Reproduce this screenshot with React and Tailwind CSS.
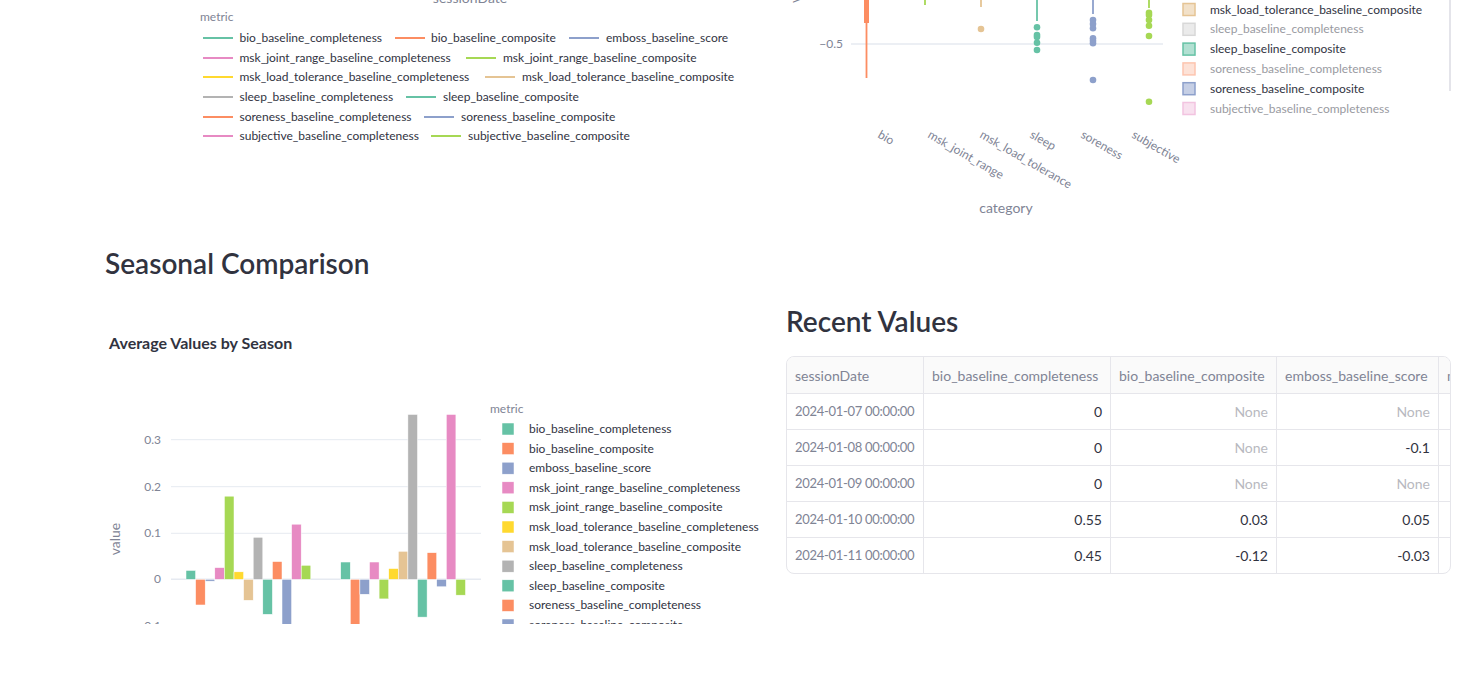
import React from 'react';

const SET2 = ['#66c2a5', '#fc8d62', '#8da0cb', '#e78ac3', '#a6d854', '#ffd92f', '#e5c494', '#b3b3b3'];
const AXIS = '#808495';
const INK = '#31333F';

const METRICS = [
  'bio_baseline_completeness',
  'bio_baseline_composite',
  'emboss_baseline_score',
  'msk_joint_range_baseline_completeness',
  'msk_joint_range_baseline_composite',
  'msk_load_tolerance_baseline_completeness',
  'msk_load_tolerance_baseline_composite',
  'sleep_baseline_completeness',
  'sleep_baseline_composite',
  'soreness_baseline_completeness',
  'soreness_baseline_composite',
  'subjective_baseline_completeness',
  'subjective_baseline_composite',
];
const colorOf = (i) => SET2[i % 8];

// line legend of the trend chart: [lineX, textX, metric index]
const LINE_LEGEND = [
  { y: 38, items: [[203, 239.5, 0], [395, 431, 1], [569, 606, 2]] },
  { y: 58, items: [[203, 239.5, 3], [466, 503, 4]] },
  { y: 77, items: [[203, 239.5, 5], [485, 522, 6]] },
  { y: 97, items: [[203, 239.5, 7], [406, 443, 8]] },
  { y: 117, items: [[203, 239.5, 9], [424, 461, 10]] },
  { y: 136, items: [[203, 239.5, 11], [431, 468, 12]] },
];

const TrendLegend = () => (
  <svg width="665" height="245" viewBox="105 0 665 245" className="block">
    <text x="470" y="3" fontSize="14" fill={AXIS} textAnchor="middle">sessionDate</text>
    <text x="200" y="21" fontSize="12" fill={AXIS}>metric</text>
    {LINE_LEGEND.map((row) =>
      row.items.map(([lx, tx, m]) => (
        <g key={m}>
          <line x1={lx} x2={lx + 30} y1={row.y} y2={row.y} stroke={colorOf(m)} strokeWidth="2" />
          <text x={tx} y={row.y + 4} fontSize="12" fill={INK}>{METRICS[m]}</text>
        </g>
      ))
    )}
  </svg>
);

const BOX_LEGEND = [
  { m: 6, on: true },
  { m: 7, on: false },
  { m: 8, on: true },
  { m: 9, on: false },
  { m: 10, on: true },
  { m: 11, on: false },
];

const CATEGORIES = [
  ['bio', 877],
  ['msk_joint_range', 927],
  ['msk_load_tolerance', 979],
  ['sleep', 1029],
  ['soreness', 1080],
  ['subjective', 1131],
];

const Dots = ({ x, ys, color }) => ys.map((y, i) => <circle key={i} cx={x} cy={y} r="3.3" fill={color} />);

const CategoryBox = () => (
  <svg width="665" height="245" viewBox="786 0 665 245" className="block">
    <text x="800" y="3" fontSize="14" fill={AXIS} transform="rotate(-90 800 3)">value</text>
    <line x1="851" x2="1163" y1="44" y2="44" stroke="#e6eaf1" strokeWidth="1.5" />
    <text x="843" y="48" fontSize="12" fill={AXIS} textAnchor="end">−0.5</text>

    <rect x="864" y="-2" width="5" height="25" fill="#fc8d62" />
    <line x1="866.5" x2="866.5" y1="22" y2="78" stroke="#fc8d62" strokeWidth="1.8" />
    <line x1="925" x2="925" y1="0" y2="5" stroke="#a6d854" strokeWidth="1.8" />
    <line x1="981" x2="981" y1="0" y2="7" stroke="#e5c494" strokeWidth="1.8" />
    <Dots x={981} ys={[29]} color="#e5c494" />
    <line x1="1037" x2="1037" y1="0" y2="21" stroke="#66c2a5" strokeWidth="1.8" />
    <Dots x={1037} ys={[27.3, 35, 37, 42.7, 50]} color="#66c2a5" />
    <line x1="1093" x2="1093" y1="0" y2="14" stroke="#8da0cb" strokeWidth="1.8" />
    <Dots x={1093} ys={[20, 24, 28.3, 38.3, 40.7, 43.3, 80]} color="#8da0cb" />
    <line x1="1149" x2="1149" y1="0" y2="8" stroke="#a6d854" strokeWidth="1.8" />
    <Dots x={1149} ys={[12.7, 15, 20, 25.7, 36, 101.7]} color="#a6d854" />

    {CATEGORIES.map(([label, x]) => (
      <text key={label} x={x} y="137" fontSize="12" fill={AXIS} transform={`rotate(30 ${x} 137)`}>{label}</text>
    ))}
    <text x="1006" y="213" fontSize="14" fill={AXIS} textAnchor="middle">category</text>

    {BOX_LEGEND.map(({ m, on }, i) => {
      const cy = 9.5 + i * 19.8;
      return (
        <g key={m} opacity={on ? 1 : 0.5}>
          <rect x="1183" y={cy - 6} width="12" height="12" fill={colorOf(m)} fillOpacity="0.5" stroke={colorOf(m)} strokeWidth="1.5" />
          <text x="1210" y={cy + 4} fontSize="12" fill={INK}>{METRICS[m]}</text>
        </g>
      );
    })}
    <line x1="1450" x2="1450" y1="0" y2="91" stroke="#e4e4ea" strokeWidth="2" />
  </svg>
);

// seasonal averages read off the chart, one value per metric
const WINTER = [0.019, -0.055, -0.004, 0.025, 0.178, 0.016, -0.045, 0.09, -0.075, 0.038, -0.2, 0.118, 0.03];
const SPRING = [0.037, -0.2, -0.032, 0.037, -0.042, 0.023, 0.06, 0.353, -0.081, 0.057, -0.016, 0.353, -0.034];
const ZERO = 579.3;
const PER_UNIT = 467;

const Bars = ({ start, values }) =>
  values.map((v, i) => {
    const h = Math.abs(v) * PER_UNIT;
    return (
      <rect
        key={i}
        x={start + i * 9.6}
        y={v > 0 ? ZERO - h : ZERO}
        width="9.6"
        height={h}
        fill={colorOf(i)}
        stroke="#ffffff"
        strokeWidth="0.5"
      />
    );
  });

const SeasonChart = () => (
  <svg width="665" height="343" viewBox="105 281 665 343" className="block">
    <text x="109" y="349" fontSize="16" fontWeight="700" fill={INK}>Average Values by Season</text>

    {[[0.3, 439.7], [0.2, 486.7], [0.1, 533.3]].map(([t, y]) => (
      <g key={t}>
        <line x1="171" x2="481" y1={y} y2={y} stroke="#e6eaf1" strokeWidth="1" />
        <text x="161" y={y + 4} fontSize="12" fill={AXIS} textAnchor="end">{t}</text>
      </g>
    ))}
    <line x1="171" x2="481" y1={ZERO} y2={ZERO} stroke="#e6eaf1" strokeWidth="1.5" />
    <text x="161" y={ZERO + 4} fontSize="12" fill={AXIS} textAnchor="end">0</text>
    <text x="161" y="630" fontSize="12" fill={AXIS} textAnchor="end">−0.1</text>
    <text x="120" y="539" fontSize="14" fill={AXIS} textAnchor="middle" transform="rotate(-90 120 539)">value</text>

    <Bars start={186} values={WINTER} />
    <Bars start={340.7} values={SPRING} />

    <text x="490" y="413" fontSize="12" fill={AXIS}>metric</text>
    {METRICS.map((m, i) => {
      const cy = 429 + i * 19.6;
      return (
        <g key={m}>
          <rect x="502" y={cy - 6} width="12" height="12" fill={colorOf(i)} stroke="#ffffff" strokeWidth="0.5" />
          <text x="529" y={cy + 4} fontSize="12" fill={INK}>{m}</text>
        </g>
      );
    })}
  </svg>
);

const COLUMNS = [
  { name: 'sessionDate', w: 'w-[137px]' },
  { name: 'bio_baseline_completeness', w: 'w-[187px]' },
  { name: 'bio_baseline_composite', w: 'w-[166px]' },
  { name: 'emboss_baseline_score', w: 'w-[162px]' },
  { name: 'msk_joint_range_baseline_completeness', w: 'w-[250px]' },
];

const ROWS = [
  ['2024-01-07 00:00:00', '0', 'None', 'None', '0'],
  ['2024-01-08 00:00:00', '0', 'None', '-0.1', '0'],
  ['2024-01-09 00:00:00', '0', 'None', 'None', '0'],
  ['2024-01-10 00:00:00', '0.55', '0.03', '0.05', '0.4'],
  ['2024-01-11 00:00:00', '0.45', '-0.12', '-0.03', '0.2'],
];

const RecentTable = () => (
  <div className="mt-[17px] overflow-hidden rounded-lg border border-[#e6e6eb]">
    <div className="flex h-[37px] border-b border-[#e6e6eb] bg-[#fafafa]">
      {COLUMNS.map((c) => (
        <div key={c.name} className={`${c.w} flex shrink-0 items-center border-r border-[#e6e6eb] px-2 text-[14px] whitespace-nowrap text-[#808495]`}>
          {c.name}
        </div>
      ))}
    </div>
    {ROWS.map((row) => (
      <div key={row[0]} className="flex h-[36px] border-b border-[#e6e6eb] last:h-[35px] last:border-b-0">
        {row.map((cell, j) => (
          <div
            key={j}
            className={`${COLUMNS[j].w} flex shrink-0 items-center border-r border-[#e6e6eb] px-2 whitespace-nowrap ${
              j === 0 ? 'justify-start text-[13px] tracking-[-0.3px] text-[#808495]' : 'justify-end text-[14px]'
            } ${cell === 'None' ? 'text-[#b8b9c0]' : j === 0 ? '' : 'text-[#31333F]'}`}
          >
            {cell}
          </div>
        ))}
      </div>
    ))}
  </div>
);

export default function App() {
  return (
    <div className="min-h-screen bg-white pl-[105px] pr-[22px] font-['Lato',sans-serif] text-[#31333F]">
      <div className="grid grid-cols-2 gap-4">
        <TrendLegend />
        <CategoryBox />
      </div>

      <h2 className="text-[28px] leading-[36px] font-semibold">Seasonal Comparison</h2>

      <div className="grid grid-cols-2 gap-4">
        <SeasonChart />
        <div>
          <h2 className="mt-[22px] text-[28px] leading-[36px] font-semibold">Recent Values</h2>
          <RecentTable />
        </div>
      </div>
    </div>
  );
}
